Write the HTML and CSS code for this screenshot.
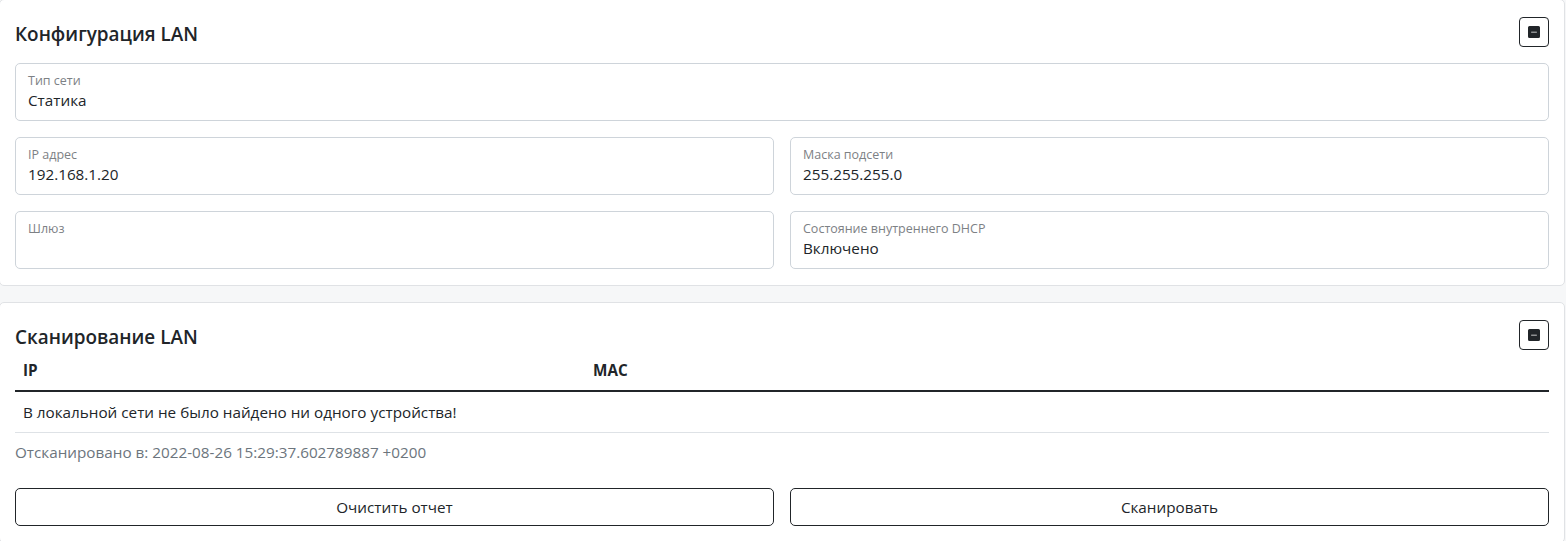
FILE: index.html
```html
<!DOCTYPE html>
<html lang="ru">
<head>
  <meta charset="UTF-8">
  <meta name="viewport" content="width=device-width, initial-scale=1.0">
  <title>LAN</title>
  <link rel="stylesheet" href="styles.css">
</head>
<body>

<div class="page">

  <!-- LAN config -->
  <section class="card">
    <div class="card-head">
      <h5 class="card-title">Конфигурация LAN</h5>
      <button class="btn-toggle" type="button" title="Свернуть">
        <svg width="12" height="12" viewBox="0 0 16 16" fill="currentColor"><path d="M2 0a2 2 0 0 0-2 2v12a2 2 0 0 0 2 2h12a2 2 0 0 0 2-2V2a2 2 0 0 0-2-2H2zm2.5 7.5h7a.5.5 0 0 1 0 1h-7a.5.5 0 0 1 0-1z"/></svg>
      </button>
    </div>

    <div class="fields">
      <div class="field wide">
        <label>Тип сети</label>
        <div class="value">Статика</div>
      </div>
      <div class="field">
        <label>IP адрес</label>
        <div class="value">192.168.1.20</div>
      </div>
      <div class="field">
        <label>Маска подсети</label>
        <div class="value">255.255.255.0</div>
      </div>
      <div class="field">
        <label>Шлюз</label>
        <div class="value"></div>
      </div>
      <div class="field">
        <label>Состояние внутреннего DHCP</label>
        <div class="value">Включено</div>
      </div>
    </div>
  </section>

  <!-- LAN scan -->
  <section class="card">
    <div class="card-head tight">
      <h5 class="card-title">Сканирование LAN</h5>
      <button class="btn-toggle" type="button" title="Свернуть">
        <svg width="12" height="12" viewBox="0 0 16 16" fill="currentColor"><path d="M2 0a2 2 0 0 0-2 2v12a2 2 0 0 0 2 2h12a2 2 0 0 0 2-2V2a2 2 0 0 0-2-2H2zm2.5 7.5h7a.5.5 0 0 1 0 1h-7a.5.5 0 0 1 0-1z"/></svg>
      </button>
    </div>

    <table class="scan-table">
      <thead>
        <tr>
          <th class="col-ip">IP</th>
          <th>MAC</th>
        </tr>
      </thead>
      <tbody>
        <tr>
          <td colspan="2">В локальной сети не было найдено ни одного устройства!</td>
        </tr>
      </tbody>
    </table>

    <p class="scan-time">Отсканировано в: 2022-08-26 15:29:37.602789887 +0200</p>

    <div class="actions">
      <button class="btn-outline" type="button">Очистить отчет</button>
      <button class="btn-outline" type="button">Сканировать</button>
    </div>
  </section>

</div>

</body>
</html>
```

FILE: styles.css
```css
* {
  box-sizing: border-box;
}

body {
  margin: 0;
  background: #f6f7f8;
  color: #212529;
  font-family: "Open Sans", "Noto Sans", sans-serif;
  font-size: 15.25px;
  line-height: 24px;
}

.page {
  margin: -1px 0 0 -1px;
  width: 1566px;
}

.card {
  background: #fff;
  border: 1px solid #e0e2e5;
  border-radius: 5px;
  padding: 17px 15px 16px 15px;
  margin-bottom: 16px;
}

.card-head {
  display: flex;
  justify-content: space-between;
  align-items: center;
  margin-bottom: 16px;
}

.card-head.tight {
  margin-bottom: 0;
}

.card-title {
  margin: 3px 0 0;
  font-size: 18.9px;
  font-weight: 600;
  line-height: 24px;
}

.btn-toggle {
  width: 30px;
  height: 30px;
  padding: 0;
  display: flex;
  align-items: center;
  justify-content: center;
  background: #fff;
  color: #212529;
  border: 1px solid #212529;
  border-radius: 4px;
}

/* floating-label style fields */
.fields {
  display: grid;
  grid-template-columns: 1fr 1fr;
  gap: 16px;
}

.field {
  height: 58px;
  border: 1px solid #ced4da;
  border-radius: 5px;
  padding: 8px 12px;
  display: flex;
  flex-direction: column;
}

.field.wide {
  grid-column: 1 / 3;
}

.field label {
  font-size: 12.5px;
  line-height: 17px;
  color: #7d8185;
}

.field .value {
  line-height: 22px;
  min-height: 22px;
}

.scan-table {
  width: 100%;
  border-collapse: collapse;
  margin-bottom: 7px;
}

.scan-table th,
.scan-table td {
  text-align: left;
  padding: 8px;
}

.scan-table th {
  font-weight: 700;
  border-bottom: 2px solid #212529;
}

.scan-table td {
  border-bottom: 1px solid #dee2e6;
}

.col-ip {
  width: 570px;
}

.scan-time {
  margin: 0 0 24px;
  color: #6c757d;
}

.actions {
  display: grid;
  grid-template-columns: 1fr 1fr;
  gap: 16px;
}

.btn-outline {
  height: 38px;
  background: #fff;
  color: #212529;
  border: 1px solid #212529;
  border-radius: 5px;
  font-family: inherit;
  font-size: 15.25px;
}
```
